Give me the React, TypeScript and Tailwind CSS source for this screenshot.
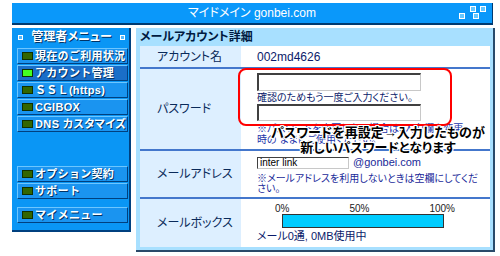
import React from "react";

const jp = "font-['Liberation_Sans','Noto_Sans_CJK_JP',sans-serif] [font-feature-settings:'palt']";

type MenuItem = { label: string; active?: boolean; tight?: boolean };

const mainItems: MenuItem[] = [
  { label: "現在のご利用状況" },
  { label: "アカウント管理", active: true },
  { label: "ＳＳＬ(https)" },
  { label: "CGIBOX" },
  { label: "DNS カスタマイズ", tight: true },
];

const subItems: MenuItem[] = [{ label: "オプション契約" }, { label: "サポート" }];

function MenuButton({ label, active, tight }: MenuItem) {
  return (
    <div
      className={`flex h-[16px] items-center gap-[2px] border border-t-[#6cc6ff] border-l-[#6cc6ff] border-b-[#00407f] border-r-[#00407f] pl-[4px] ${
        active ? "bg-[#1a6ec8]" : "bg-[#1a94f0]"
      }`}
    >
      <span
        className={`h-[8px] w-[11px] shrink-0 border border-[#103000] ${active ? "bg-[#44ff22]" : "bg-[#336600]"}`}
      />
      <span
        className={`whitespace-nowrap text-[11px] font-bold leading-none text-white [text-shadow:1px_1px_0_#003366] ${
          tight ? "tracking-[0.4px]" : "tracking-[0.3px] [font-feature-settings:normal]"
        }`}
      >
        {label}
      </span>
    </div>
  );
}

function TinySquare() {
  return <span className="h-[5px] w-[5px] border border-white bg-[#55bbff]" />;
}

function Corner() {
  return (
    <svg width="30" height="15" viewBox="0 0 30 15" className="absolute right-[3px] top-[2px]">
      <g fill="#66c8ff" stroke="#ffffff" strokeWidth="1">
        <rect x="11.5" y="1.5" width="5" height="5" />
        <rect x="21.5" y="1.5" width="5" height="5" />
        <rect x="0.5" y="8.5" width="5" height="5" />
        <rect x="14.5" y="8.5" width="5" height="5" />
      </g>
    </svg>
  );
}

const labelCell = "flex w-[101px] shrink-0 items-center bg-[#ddefff] pl-[17px] text-[12px] text-[#0a2a5a]";
const valueCell = "flex flex-1 items-center bg-white pl-[16px]";
const outline =
  "[text-shadow:1px_0_0_#fff,-1px_0_0_#fff,0_1px_0_#fff,0_-1px_0_#fff,1px_1px_0_#fff,-1px_-1px_0_#fff,1px_-1px_0_#fff,-1px_1px_0_#fff]";

export default function App() {
  return (
    <div className={`h-[256px] w-[500px] overflow-hidden bg-white pl-[12px] pt-[3px] ${jp}`}>
      <div className="relative flex h-[22px] w-[481px] items-center justify-center border-b-2 border-r border-[#003a70] bg-[#0a98fa] text-[12px] text-white">
        マイドメイン gonbei.com
        <Corner />
      </div>

      <div className="mt-[3px] flex gap-[5px]">
        <aside className="flex h-[204px] w-[119px] flex-col border-b-2 border-r-2 border-[#00407f] bg-[#0a96f5] pl-[5px] pr-[1px]">
          <div className="flex h-[18px] items-center justify-between pl-[1px] pr-[3px]">
            <TinySquare />
            <span className="text-[12px] font-bold text-white [text-shadow:1px_1px_0_#003366]">管理者メニュー</span>
            <TinySquare />
          </div>
          <div className="mt-[2px] flex flex-col gap-[1px]">
            {mainItems.map((m) => (
              <MenuButton key={m.label} {...m} />
            ))}
          </div>
          <div className="mt-[34px] flex flex-col gap-[1px]">
            {subItems.map((m) => (
              <MenuButton key={m.label} {...m} />
            ))}
          </div>
          <div className="mt-[8px]">
            <MenuButton label="マイメニュー" />
          </div>
        </aside>

        <section className="flex h-[224px] w-[359px] flex-col border-b-2 border-r-2 border-[#2a4a6a] bg-[#a8e0ff] pl-[4px] pr-[3px]">
          <div className="flex h-[18px] items-center text-[12px] font-bold text-[#001a40]">メールアカウント詳細</div>

          <div className="flex h-[23px] border-b-2 border-[#4477cc]">
            <div className={labelCell}>アカウント名</div>
            <div className={`${valueCell} text-[12px] text-[#0a1a6a]`}>002md4626</div>
          </div>

          <div className="relative flex h-[82px] border-b-2 border-[#4477cc]">
            <div className={labelCell}>パスワード</div>
            <div className={`${valueCell} flex-col items-start justify-center`}>
              <input
                readOnly
                className="h-[18px] w-[164px] border-b border-l-2 border-r border-t-2 border-b-[#c8c8c8] border-l-[#404040] border-r-[#c8c8c8] border-t-[#404040] bg-white"
              />
              <div className="h-[13px] text-[10px] leading-[13px] text-[#0a1a6a]">確認のためもう一度ご入力ください。</div>
              <input
                readOnly
                className="h-[17px] w-[164px] border-b border-l-2 border-r border-t-2 border-b-[#c8c8c8] border-l-[#404040] border-r-[#c8c8c8] border-t-[#404040] bg-white"
              />
              <div className="mt-[2px] w-[215px] text-[10px] leading-[11px] text-[#2233aa]">
                ※パスワードを変更しない場合は、入力欄を変更時の ままにご使用ください。
              </div>
            </div>
            <div className="pointer-events-none absolute left-[98px] top-[-1px] h-[58px] w-[214px] rounded-[8px] border-2 border-[#ff0000]" />
            <div
              className={`pointer-events-none absolute left-[118px] top-[56px] w-[240px] text-center text-[13px] font-bold leading-[15px] text-black ${outline}`}
            >
              パスワードを再設定→入力したものが
              <br />
              新しいパスワードとなります
            </div>
          </div>

          <div className="flex h-[48px] border-b-2 border-[#4477cc]">
            <div className={labelCell}>メールアドレス</div>
            <div className={`${valueCell} flex-col items-start justify-center`}>
              <div className="flex items-center gap-[4px]">
                <div className="flex h-[12px] w-[92px] items-center border-l border-t border-b border-r border-l-[#404040] border-t-[#404040] border-b-[#c8c8c8] border-r-[#c8c8c8] pl-[2px] text-[10px] leading-none text-black">
                  inter link
                </div>
                <span className="text-[11px] text-[#1a2a99]">@gonbei.com</span>
              </div>
              <div className="mt-[3px] w-[230px] text-[10px] leading-[10px] text-[#1a2a99]">
                ※メールアドレスを利用しないときは空欄にしてください。
              </div>
            </div>
          </div>

          <div className="flex h-[48px]">
            <div className={labelCell}>メールボックス</div>
            <div className={`${valueCell} flex-col items-start justify-center`}>
              <div className="ml-[18px] flex w-[180px] justify-between text-[10px] leading-[11px] text-[#222]">
                <span>0%</span>
                <span>50%</span>
                <span>100%</span>
              </div>
              <div className="ml-[25px] h-[14px] w-[162px] border border-[#333] bg-[#00ccff]" />
              <div className="mt-[2px] text-[11px] leading-[13px] text-[#0a1a6a]">メール0通, 0MB使用中</div>
            </div>
          </div>
        </section>
      </div>
    </div>
  );
}
